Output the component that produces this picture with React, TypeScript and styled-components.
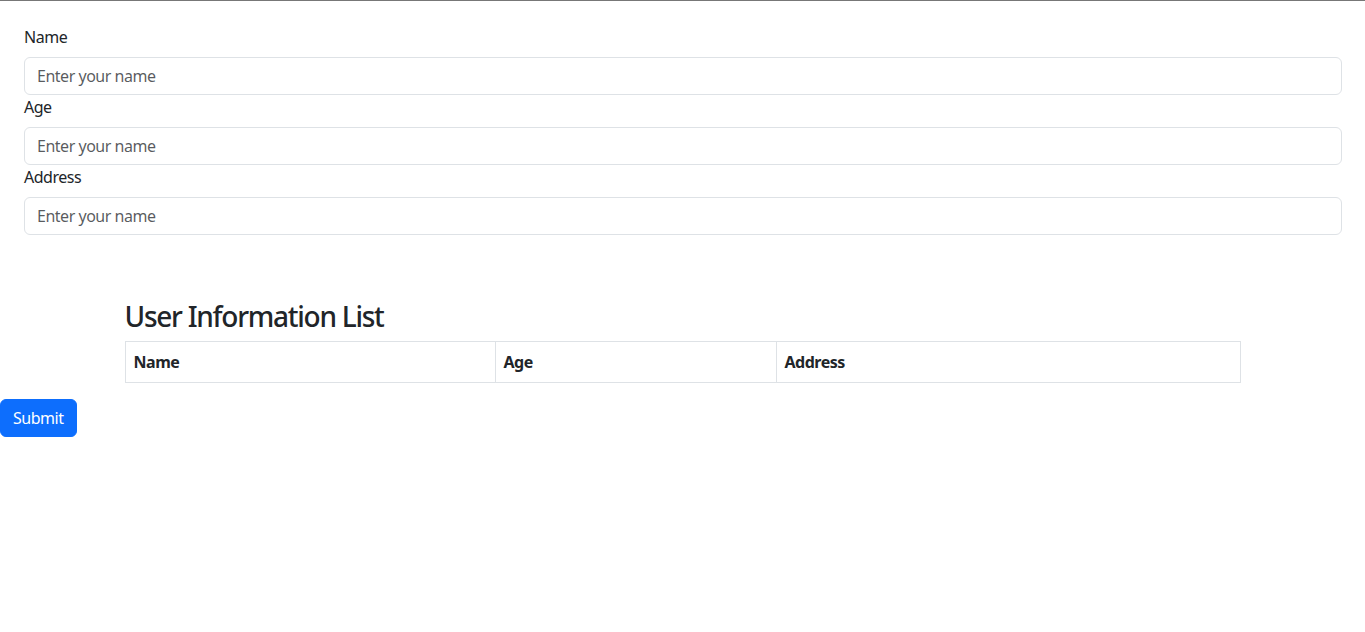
import React from "react";
import styled, { createGlobalStyle } from "styled-components";

const GlobalStyle = createGlobalStyle`
  *, *::before, *::after { box-sizing: border-box; }
  html, body { margin: 0; padding: 0; background: #fff; }
  body {
    font-family: "Noto Sans", "Liberation Sans", sans-serif;
    font-size: 16px;
    line-height: 1.5;
    letter-spacing: -0.03em;
    color: #212529;
  }
`;

const Page = styled.div`
  border-top: 1px solid #777;
`;

const Form = styled.form`
  padding: 24px 23px 24px 24px;
  display: flex;
  flex-direction: column;
`;

const Label = styled.label`
  display: block;
  margin-bottom: 8px;
  font-size: 16px;
  line-height: 24px;
`;

const Input = styled.input`
  display: block;
  width: 100%;
  height: 38px;
  padding: 6px 12px;
  font: inherit;
  font-size: 16px;
  line-height: 24px;
  letter-spacing: -0.03em;
  color: #212529;
  background: #fff;
  border: 1px solid #dee2e6;
  border-radius: 6px;
  outline: none;
  &::placeholder { color: rgba(33, 37, 41, 0.75); }
`;

const Container = styled.section`
  max-width: 1140px;
  margin: 40px auto 0;
  padding: 0 12px;
`;

const Heading = styled.h3`
  margin: 0 0 8px;
  padding-top: 2px;
  font-size: 28px;
  font-weight: 500;
  line-height: 31.6px;
  letter-spacing: -0.045em;
`;

const Table = styled.table`
  width: 100%;
  border-collapse: collapse;
  margin-bottom: 16px;
  border: 1px solid #dee2e6;
`;

const Th = styled.th`
  text-align: left;
  padding: 8px;
  font-weight: 700;
  line-height: 24px;
  border: 1px solid #dee2e6;
  width: ${(p: { $w: string }) => p.$w};
`;

const Button = styled.button`
  display: inline-block;
  height: 38px;
  padding: 6px 12px;
  font: inherit;
  font-size: 16px;
  line-height: 24px;
  letter-spacing: -0.03em;
  color: #fff;
  background: #0d6efd;
  border: 1px solid #0d6efd;
  border-radius: 6px;
  cursor: pointer;
`;

export default function App() {
  return (
    <Page>
      <GlobalStyle />
      <Form onSubmit={(e) => e.preventDefault()}>
        <Label htmlFor="name">Name</Label>
        <Input id="name" placeholder="Enter your name" />
        <Label htmlFor="age">Age</Label>
        <Input id="age" placeholder="Enter your name" />
        <Label htmlFor="address">Address</Label>
        <Input id="address" placeholder="Enter your name" />
      </Form>
      <Container>
        <Heading>User Information List</Heading>
        <Table>
          <thead>
            <tr>
              <Th $w="370px">Name</Th>
              <Th $w="281px">Age</Th>
              <Th $w="auto">Address</Th>
            </tr>
          </thead>
        </Table>
      </Container>
      <Button type="button">Submit</Button>
    </Page>
  );
}
